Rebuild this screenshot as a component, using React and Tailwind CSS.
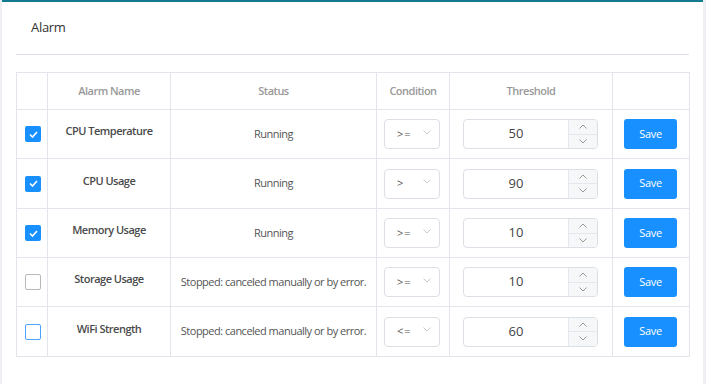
import React, { useState } from 'react';

const rows = [
    { name: 'CPU Temperature', status: 'Running', cond: '>=', value: 50, checked: true, h: 'h-[49px]' },
    { name: 'CPU Usage', status: 'Running', cond: '>', value: 90, checked: true, h: 'h-[50px]' },
    { name: 'Memory Usage', status: 'Running', cond: '>=', value: 10, checked: true, h: 'h-[49px]' },
    { name: 'Storage Usage', status: 'Stopped: canceled manually or by error.', cond: '>=', value: 10, checked: false, h: 'h-[49px]' },
    { name: 'WiFi Strength', status: 'Stopped: canceled manually or by error.', cond: '<=', value: 60, checked: false, focus: true, h: 'h-[50px]' },
];

const Chevron = ({ up, className }) => (
    <svg width="8" height="5" viewBox="0 0 8 5" className={className} fill="none">
        <path d={up ? 'M0.5 4.5 L4 1 L7.5 4.5' : 'M0.5 0.5 L4 4 L7.5 0.5'} stroke="currentColor" strokeWidth="1" />
    </svg>
);

const Checkbox = ({ checked, focus }) => {
    if (checked) {
        return (
            <span className="w-4 h-4 rounded-[2px] bg-[#1890ff] flex items-center justify-center">
                <svg width="9" height="7" viewBox="0 0 9 7" fill="none">
                    <path d="M1 3.5 L3.5 6 L8 1" stroke="white" strokeWidth="1.6" />
                </svg>
            </span>
        );
    }
    return <span className={`w-4 h-4 rounded-[2px] border ${focus ? 'border-[#4aa3ff]' : 'border-[#b8b8b8]'} bg-white block`} />;
};

const AlarmRow = ({ row }) => {
    const [value, setValue] = useState(row.value);
    return (
        <tr className={row.h}>
            <td className="border border-[#e2e6ec] pl-[8px]">
                <div className="flex"><Checkbox checked={row.checked} focus={row.focus} /></div>
            </td>
            <td className="border border-[#e2e6ec] text-center font-semibold text-[#4a4a4a] pb-[5px] tracking-[-0.5px]">{row.name}</td>
            <td className="border border-[#e2e6ec] text-center text-[#555] tracking-[-0.5px]">{row.status}</td>
            <td className="border border-[#e2e6ec] pl-[7px]">
                <div className="w-[56px] h-[30px] border border-[#dcdfe6] rounded-[4px] flex items-center justify-between pl-[12px] pr-[8px] text-[#555]">
                    <span className="tracking-[1px]">{row.cond}</span>
                    <Chevron className="text-[#c8cbd2] -mt-[4px]" />
                </div>
            </td>
            <td className="border border-[#e2e6ec] px-[13px]">
                <div className="w-[135px] h-[30px] border border-[#dcdfe6] rounded-[4px] flex overflow-hidden">
                    <div className="flex-1 flex items-center justify-center text-[13px] text-[#444]">{value}</div>
                    <div className="w-[29px] border-l border-[#e4e7ed] bg-[#f6f7f9] flex flex-col">
                        <button onClick={() => setValue(value + 1)} className="flex-1 flex items-center justify-center border-b border-[#e4e7ed] text-[#999]">
                            <Chevron up />
                        </button>
                        <button onClick={() => setValue(value - 1)} className="flex-1 flex items-center justify-center text-[#999]">
                            <Chevron />
                        </button>
                    </div>
                </div>
            </td>
            <td className="border border-[#e2e6ec] px-[11px]">
                <button className="w-[53px] h-[30px] rounded-[3px] bg-[#1890ff] text-white text-[11px] tracking-[-0.3px]">Save</button>
            </td>
        </tr>
    );
};

const App = () => {
    return (
        <div className="w-[706px] h-[384px] flex bg-[#eef0f4] overflow-hidden" style={{ fontFamily: '"Open Sans", "Noto Sans", sans-serif' }}>
            <div className="ml-[2px] w-[701px] h-full bg-white border-t-2 border-[#137a90] px-[14px]">
                <div className="h-[53px] border-b border-[#dde1e7] flex items-center pl-[15px] text-[13px] text-[#333] tracking-[-0.3px]">Alarm</div>
                <table className="mt-[17px] w-[673px] border-collapse text-[11px] table-fixed">
                    <colgroup>
                        <col className="w-[31px]" />
                        <col className="w-[123px]" />
                        <col className="w-[206px]" />
                        <col className="w-[73px]" />
                        <col className="w-[163px]" />
                        <col className="w-[77px]" />
                    </colgroup>
                    <thead>
                        <tr className="h-[37px] text-[#999] tracking-[-0.5px]">
                            <th className="border border-[#e2e6ec]"></th>
                            <th className="border border-[#e2e6ec] font-semibold">Alarm Name</th>
                            <th className="border border-[#e2e6ec] font-semibold">Status</th>
                            <th className="border border-[#e2e6ec] font-semibold">Condition</th>
                            <th className="border border-[#e2e6ec] font-semibold">Threshold</th>
                            <th className="border border-[#e2e6ec]"></th>
                        </tr>
                    </thead>
                    <tbody>
                        {rows.map((row) => (
                            <AlarmRow key={row.name} row={row} />
                        ))}
                    </tbody>
                </table>
            </div>
        </div>
    );
};

export default App;
